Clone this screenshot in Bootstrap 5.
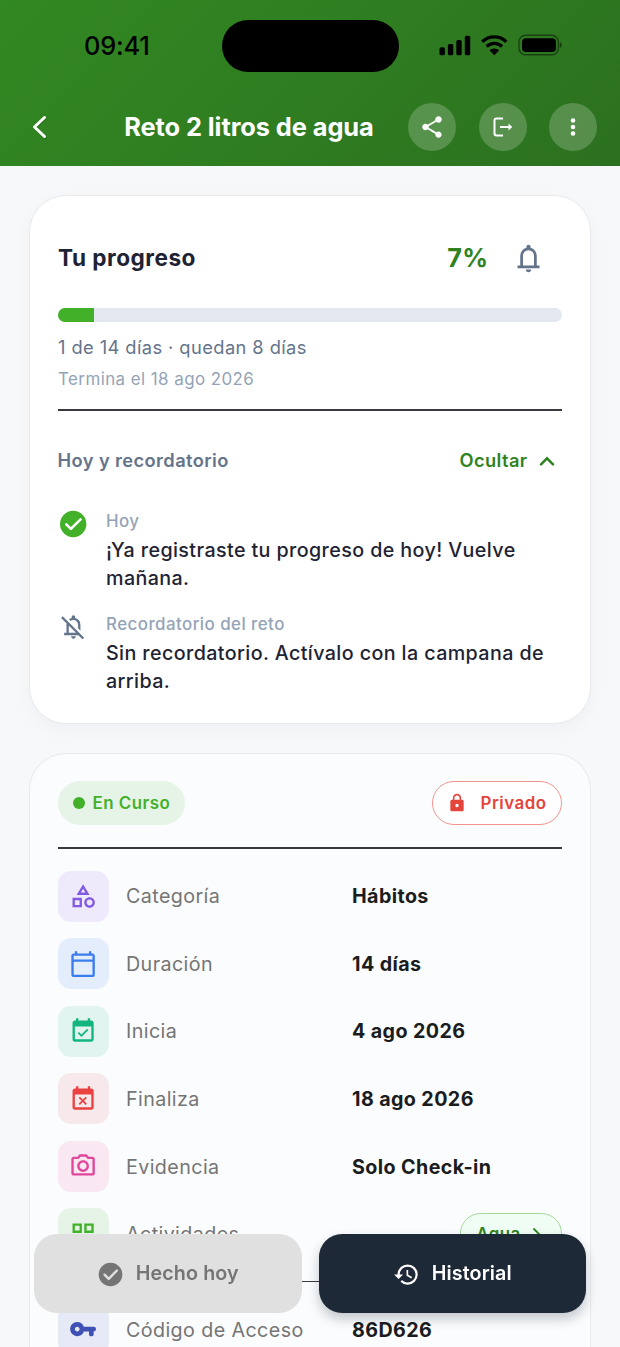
<!DOCTYPE html>
<html lang="es">
<head>
<meta charset="utf-8">
<meta name="viewport" content="width=device-width, initial-scale=1">
<title>Reto 2 litros de agua</title>
<link href="https://cdn.jsdelivr.net/npm/bootstrap@5.3.0/dist/css/bootstrap.min.css" rel="stylesheet">
<style>
  body { font-family: Inter, "Liberation Sans", sans-serif; background: #f6f8fa; color: #1e2333; height: 1347px; letter-spacing: .35px; }
  svg { display: block; flex: none; }
  .app-header { height: 166px; background: linear-gradient(135deg, #328822 0%, #2f7d21 50%, #2c701f 100%); }
  .status-bar { height: 91px; color: #000; }
  .clock { font-size: 25.4px; font-weight: 550; letter-spacing: -.2px; width: 137px; padding: 2px 0 0 84px; white-space: nowrap; }
  .island { width: 177px; height: 52px; border-radius: 26px; background: #000; margin-left: 84.5px; }
  .status-icons { margin: -1px 0 0 40.5px; }
  .toolbar { height: 72px; padding: 0 23px 0 31px; }
  .page-title { font-size: 25.4px; font-weight: 650; letter-spacing: -.08px; line-height: 1; color: #fff; padding-left: 41px; }
  .round-btn { width: 48px; height: 48px; background: rgba(255,255,255,.2); color: #fff; }
  .panel { margin: 0 29px 0 28.5px; border: 1.5px solid #e8eaed; border-radius: 37px; padding: 27.5px 28px; }
  .panel-progress { margin-top: 28.5px; height: 529px; padding-top: 28.5px; background: #fff; box-shadow: 0 6px 18px rgba(30,41,59,.035); }
  .panel-details { margin-top: 29px; height: 594px; background: #fafcfd; border-bottom: 0; border-radius: 37px 37px 0 0; padding-bottom: 0; }
  .head-row { height: 67.6px; }
  .panel-title { font-size: 22.6px; font-weight: 700; letter-spacing: .5px; padding: 1px 0 0 .5px; }
  .percent { font-size: 25.4px; font-weight: 750; color: #2f831f; margin-right: 6px; }
  .bell-btn { width: 67.6px; height: 67.6px; color: #64748b; padding-top: 1px; }
  .track { height: 14px; border-radius: 7px; background: #e3e8f0; margin-top: 16.5px; overflow: hidden; }
  .track .progress-bar { background: #43b02a; }
  .days { font-size: 18.3px; line-height: 26px; color: #64748b; margin-top: 12px; letter-spacing: .42px; padding-left: .5px; }
  .ends { font-size: 16.9px; line-height: 25px; color: #94a3b8; margin-top: 6.5px; letter-spacing: .45px; padding-left: .5px; }
  .rule { height: 1.5px; background: #3b3840; }
  .section-row { height: 50px; margin-top: 25.5px; font-size: 18.3px; font-weight: 630; color: #64748b; letter-spacing: .4px; }
  .toggle { color: #2f831f; padding-right: 7.5px; gap: 11px; }
  .note { gap: 18.5px; }
  .note > svg { margin-top: -1px; }
  .note-label { font-size: 16.9px; font-weight: 500; line-height: 23px; color: #94a3b8; letter-spacing: .45px; }
  .note-text { font-size: 19.7px; font-weight: 550; line-height: 28.1px; margin-top: 3px; letter-spacing: .4px; }
  .pill { height: 44px; border-radius: 22px; font-size: 16.9px; font-weight: 630; letter-spacing: .5px; }
  .pill-state { background: #e6f4e8; color: #43b02a; padding: 0 15px; gap: 8px; }
  .dot { width: 12px; height: 12px; background: #43b02a; }
  .pill-private { background: #fff; color: #e5443b; border: 1.3px solid #f2948e; padding: 0 14.5px 0 14px; gap: 14px; }
  .detail-row { height: 51px; margin-bottom: 16.6px; font-size: 19.7px; letter-spacing: .4px; }
  .tile { width: 51px; height: 51px; border-radius: 13px; margin-right: 17.5px; }
  .detail-name { width: 226px; color: #757575; padding-top: 2px; }
  .detail-value { color: #1a1c1e; font-weight: 650; padding-top: 2px; }
  .pill-link { height: 41px; border-radius: 21px; background: #f0fdf4; border: 1.3px solid #a5d89a; color: #2f831f; font-size: 16.9px; font-weight: 630; padding: 1px 14.5px 0 15.5px; gap: 6px; }
  .actions { padding: 0 34px; bottom: 34px; gap: 17px; }
  .action { height: 79px; border-radius: 23px; font-size: 19.7px; font-weight: 630; gap: 12px; letter-spacing: .1px; flex: 1 1 0; padding-top: 1px; }
  .action-done { background: #e0e0e0; color: #757575; }
  .action-log { background: #1e2937; color: #fff; box-shadow: 0 6px 12px rgba(30,41,59,.25); }
</style>
</head>
<body class="overflow-hidden">
<header class="app-header">
  <div class="status-bar d-flex align-items-center">
    <div class="clock">09:41</div>
    <div class="island"></div>
    <svg class="status-icons" width="125" height="22" viewBox="0 0 125 22">
      <g fill="#000">
        <rect x="0.5" y="13.3" width="5.4" height="8" rx="1.5"/>
        <rect x="8.9" y="10" width="5.4" height="11.3" rx="1.5"/>
        <rect x="17.3" y="6" width="5.4" height="15.3" rx="1.5"/>
        <rect x="25.8" y="1.8" width="5.4" height="19.5" rx="1.5"/>
        <path d="M55.3 14.6c1.9 0 3.6.7 4.7 1.9l-4.700 4.700-4.700-4.700c1.100-1.200 2.800-1.900 4.700-1.900z"/>
        <rect x="83" y="4.3" width="34" height="13.7" rx="4"/>
        <path opacity=".5" d="M120.8 8v6c1.200-.5 2-1.700 2-3s-.8-2.500-2-3z"/>
      </g>
      <path d="M43.3 7.800a17.300 17.300 0 0 1 24 0M47.600 12.500a11.200 11.200 0 0 1 15.400 0" fill="none" stroke="#000" stroke-width="3.300"/>
      <rect x="80" y="1.3" width="39.4" height="19.5" rx="6.5" fill="none" stroke="#000" stroke-opacity=".45" stroke-width="1.400"/>
    </svg>
  </div>
  <div class="toolbar d-flex align-items-center">
    <svg width="18" height="26" viewBox="0 0 18 26" fill="none" stroke-linecap="round" stroke-linejoin="round" stroke-width="3"><path d="M14 4.500 4 14l10 9.500" stroke="#1c5a12" stroke-opacity=".6"/><path d="M13.500 3.500 3.500 13l10 9.500" stroke="#fff"/></svg>
    <h1 class="page-title mb-0 flex-grow-1 text-center">Reto 2 litros de agua</h1>
    <div class="d-flex" style="gap:22.5px">
      <div class="round-btn rounded-circle d-flex align-items-center justify-content-center"><svg width="26" height="26" viewBox="0 0 24 24" fill="currentColor"><path d="M18 16.080c-.76 0-1.440.3-1.960.77L8.910 12.700c.05-.23.09-.46.09-.7s-.04-.47-.09-.7l7.050-4.110c.54.5 1.250.81 2.040.81 1.660 0 3-1.340 3-3s-1.340-3-3-3-3 1.340-3 3c0 .24.04.47.09.7L8.040 9.810C7.500 9.310 6.790 9 6 9c-1.660 0-3 1.340-3 3s1.340 3 3 3c.79 0 1.500-.31 2.040-.81l7.120 4.160c-.05.21-.08.43-.08.65 0 1.610 1.310 2.920 2.920 2.920s2.920-1.310 2.920-2.920-1.310-2.920-2.920-2.920z"/></svg></div>
      <div class="round-btn rounded-circle d-flex align-items-center justify-content-center"><svg width="26" height="26" viewBox="0 0 26 26" fill="none" stroke="currentColor" stroke-width="2"><path d="M13 4.500H6.500a2 2 0 0 0-2 2v13a2 2 0 0 0 2 2H13M10 13h9"/><path d="M18.500 9.500v7L22.300 13z" fill="currentColor" stroke="none"/></svg></div>
      <div class="round-btn rounded-circle d-flex align-items-center justify-content-center"><svg width="26" height="26" viewBox="0 0 24 24" fill="currentColor"><circle cx="12" cy="6" r="2.100"/><circle cx="12" cy="12" r="2.100"/><circle cx="12" cy="18" r="2.100"/></svg></div>
    </div>
  </div>
</header>

<main>
  <section class="panel panel-progress">
    <div class="head-row d-flex align-items-center">
      <div class="panel-title flex-grow-1">Tu progreso</div>
      <div class="percent">7%</div>
      <div class="bell-btn d-flex align-items-center justify-content-center"><svg width="33" height="33" viewBox="0 -960 960 960" fill="currentColor"><path d="M160-200v-80h80v-280q0-83 50-147.500T420-792v-28q0-25 17.500-42.500T480-880q25 0 42.500 17.500T540-820v28q80 20 130 84.500T720-560v280h80v80H160ZM480-80q-33 0-56.500-23.500T400-160h160q0 33-23.500 56.500T480-80ZM320-280h320v-280q0-66-47-113t-113-47q-66 0-113 47t-47 113v280Z"/></svg></div>
    </div>
    <div class="track d-flex"><div class="progress-bar" style="width:7.14%"></div></div>
    <div class="days">1 de 14 días · quedan 8 días</div>
    <div class="ends">Termina el 18 ago 2026</div>
    <div class="rule" style="margin-top:17.5px"></div>
    <div class="section-row d-flex align-items-center justify-content-between">
      <span>Hoy y recordatorio</span>
      <span class="toggle d-flex align-items-center">Ocultar
        <svg width="16" height="12" viewBox="0 0 16 12" fill="none" stroke="currentColor" stroke-width="2.500" stroke-linecap="round"><path d="M2 9.300 8 3.300l6 6"/></svg></span>
    </div>
    <div class="note d-flex" style="margin-top:23.5px">
      <svg width="30" height="30" viewBox="0 0 30 30"><circle cx="15.200" cy="15" r="13.200" fill="#43b02a"/><path d="m8.300 15.300 4.600 4.600L22.500 10.300" fill="none" stroke="#fff" stroke-width="2.600" stroke-linecap="round" stroke-linejoin="round"/></svg>
      <div>
        <div class="note-label">Hoy</div>
        <div class="note-text">¡Ya registraste tu progreso de hoy! Vuelve mañana.</div>
      </div>
    </div>
    <div class="note d-flex" style="margin-top:21px">
      <svg width="30" height="30" viewBox="-50 -995 1030 1030" fill="#64748b"><path d="M160-200v-80h80v-280q0-33 8.500-65t25.500-61l60 60q-7 16-10.500 32.500T320-560v280h248L56-792l56-56 736 736-56 56-146-144H160Zm560-154-80-80v-126q0-66-47-113t-113-47q-26 0-50 8t-44 24l-58-58q20-16 43-28t49-18v-28q0-25 17.500-42.500T480-880q25 0 42.500 17.500T540-820v28q80 20 130 84.500T720-560v206ZM480-80q-33 0-56.500-23.500T400-160h160q0 33-23.500 56.500T480-80Z"/></svg>
      <div>
        <div class="note-label">Recordatorio del reto</div>
        <div class="note-text">Sin recordatorio. Actívalo con la campana de arriba.</div>
      </div>
    </div>
  </section>

  <section class="panel panel-details overflow-hidden">
    <div class="d-flex justify-content-between">
      <div class="pill pill-state d-flex align-items-center"><span class="dot rounded-circle"></span><span style="padding-top:2px">En Curso</span></div>
      <div class="pill pill-private d-flex align-items-center"><svg width="20" height="20" viewBox="0 0 24 24" fill="currentColor"><path d="M18 8h-1V6c0-2.760-2.240-5-5-5S7 3.240 7 6v2H6c-1.100 0-2 .9-2 2v10c0 1.100.9 2 2 2h12c1.100 0 2-.9 2-2V10c0-1.100-.9-2-2-2zm-6 9c-1.100 0-2-.9-2-2s.9-2 2-2 2 .9 2 2-.9 2-2 2zm3.100-9H8.900V6c0-1.710 1.390-3.100 3.100-3.100s3.100 1.390 3.100 3.100v2z"/></svg><span style="padding-top:2px">Privado</span></div>
    </div>
    <div class="rule" style="margin:22px 0"></div>
    <div class="detail-row d-flex align-items-center">
      <div class="tile d-flex align-items-center justify-content-center" style="background:#eeeafc;color:#8259e2"><svg width="28.200" height="28.200" viewBox="0 0 24 24" fill="currentColor"><path d="M12 2l-5.500 9h11L12 2zm0 3.840L13.930 9h-3.870L12 5.840zM17.500 13c-2.490 0-4.500 2.010-4.500 4.500s2.010 4.500 4.500 4.500 4.500-2.010 4.500-4.500-2.010-4.500-4.500-4.500zm0 7c-1.380 0-2.500-1.120-2.500-2.500s1.120-2.500 2.500-2.500 2.500 1.120 2.500 2.500-1.120 2.500-2.500 2.500zM3 21.500h8v-8H3v8zm2-6h4v4H5v-4z"/></svg></div>
      <div class="detail-name">Categoría</div><div class="detail-value">Hábitos</div>
    </div>
    <div class="detail-row d-flex align-items-center">
      <div class="tile d-flex align-items-center justify-content-center" style="background:#e4edfb;color:#3b7ded"><svg width="28.200" height="28.200" viewBox="0 0 24 24" fill="currentColor"><path d="M20 3h-1V1h-2v2H7V1H5v2H4c-1.100 0-2 .9-2 2v16c0 1.100.9 2 2 2h16c1.100 0 2-.9 2-2V5c0-1.100-.9-2-2-2zm0 18H4V10h16v11zm0-13H4V5h16v3z"/></svg></div>
      <div class="detail-name">Duración</div><div class="detail-value">14 días</div>
    </div>
    <div class="detail-row d-flex align-items-center">
      <div class="tile d-flex align-items-center justify-content-center" style="background:#e2f4ef;color:#12b57e"><svg width="28.200" height="28.200" viewBox="0 0 24 24" fill="currentColor"><path d="M16.530 11.060L15.470 10l-4.880 4.880-2.120-2.120-1.060 1.060L10.590 17l5.940-5.940zM19 3h-1V1h-2v2H8V1H6v2H5c-1.110 0-1.990.9-1.990 2L3 19c0 1.100.89 2 2 2h14c1.100 0 2-.9 2-2V5c0-1.100-.9-2-2-2zm0 16H5V8h14v11z"/></svg></div>
      <div class="detail-name">Inicia</div><div class="detail-value">4 ago 2026</div>
    </div>
    <div class="detail-row d-flex align-items-center">
      <div class="tile d-flex align-items-center justify-content-center" style="background:#f7e8eb;color:#eb4141"><svg width="28.200" height="28.200" viewBox="0 0 24 24" fill="currentColor"><path d="M9.310 17l2.440-2.440L14.190 17l1.060-1.060-2.440-2.440 2.440-2.440L14.190 10l-2.440 2.440L9.310 10l-1.060 1.060 2.440 2.440-2.440 2.440L9.310 17zM19 3h-1V1h-2v2H8V1H6v2H5c-1.110 0-1.990.9-1.990 2L3 19c0 1.100.89 2 2 2h14c1.100 0 2-.9 2-2V5c0-1.100-.9-2-2-2zm0 16H5V8h14v11z"/></svg></div>
      <div class="detail-name">Finaliza</div><div class="detail-value">18 ago 2026</div>
    </div>
    <div class="detail-row d-flex align-items-center">
      <div class="tile d-flex align-items-center justify-content-center" style="background:#f9e7f2;color:#e0479a"><svg width="28.200" height="28.200" viewBox="0 0 24 24" fill="currentColor"><path d="M20 4h-3.170L15 2H9L7.170 4H4c-1.100 0-2 .9-2 2v12c0 1.100.9 2 2 2h16c1.100 0 2-.9 2-2V6c0-1.100-.9-2-2-2zm0 14H4V6h4.050l1.830-2h4.240l1.830 2H20v12zM12 7c-2.760 0-5 2.240-5 5s2.240 5 5 5 5-2.240 5-5-2.240-5-5-5zm0 8c-1.650 0-3-1.350-3-3s1.350-3 3-3 3 1.350 3 3-1.350 3-3 3z"/></svg></div>
      <div class="detail-name">Evidencia</div><div class="detail-value">Solo Check-in</div>
    </div>
    <div class="detail-row d-flex align-items-center mb-0">
      <div class="tile d-flex align-items-center justify-content-center" style="background:#e5f4e6;color:#43b02a"><svg width="28.200" height="28.200" viewBox="0 0 24 24" fill="currentColor"><path d="M3 3v8h8V3H3zm6 6H5V5h4v4zm-6 4v8h8v-8H3zm6 6H5v-4h4v4zm4-16v8h8V3h-8zm6 6h-4V5h4v4zm-6 4v8h8v-8h-8zm6 6h-4v-4h4v4z"/></svg></div>
      <div class="detail-name">Actividades</div>
      <div class="pill-link d-flex align-items-center ms-auto">Agua<svg width="20" height="20" viewBox="0 0 20 20" fill="none" stroke="currentColor" stroke-width="1.800" stroke-linecap="round"><path d="m7 5 5 5-5 5"/></svg></div>
    </div>
    <div class="rule" style="margin:21.5px 0"></div>
    <div class="detail-row d-flex align-items-center">
      <div class="tile d-flex align-items-center justify-content-center" style="background:#e6e9f6;color:#3f51b5"><svg width="28.200" height="28.200" viewBox="0 0 24 24" fill="currentColor"><path d="M12.650 10C11.830 7.670 9.610 6 7 6c-3.310 0-6 2.690-6 6s2.690 6 6 6c2.610 0 4.830-1.670 5.650-4H17v2.500a1.500 1.500 0 0 0 1.500 1.500h1a1.500 1.500 0 0 0 1.500-1.500V14a2 2 0 0 0 2-2 2 2 0 0 0-2-2H12.650zM7 14c-1.100 0-2-.9-2-2s.9-2 2-2 2 .9 2 2-.9 2-2 2z"/></svg></div>
      <div class="detail-name">Código de Acceso</div><div class="detail-value">86D626</div>
    </div>
  </section>
</main>

<div class="actions position-fixed start-0 end-0 d-flex">
  <div class="action action-done d-flex align-items-center justify-content-center"><svg width="27" height="27" viewBox="0 0 27 27"><circle cx="13.500" cy="13.500" r="11.800" fill="#757575"/><path d="m7.500 13.700 4.200 4.200 8.200-8.400" fill="none" stroke="#e0e0e0" stroke-width="2.400" stroke-linecap="round" stroke-linejoin="round"/></svg>Hecho hoy</div>
  <div class="action action-log d-flex align-items-center justify-content-center"><svg width="27" height="27" viewBox="0 0 24 24" fill="currentColor"><path d="M13 3a9 9 0 0 0-9 9H1l3.890 3.890.07.140L9 12H6c0-3.870 3.130-7 7-7s7 3.130 7 7-3.130 7-7 7c-1.930 0-3.680-.79-4.940-2.060l-1.420 1.420A8.954 8.954 0 0 0 13 21a9 9 0 0 0 0-18zm-1 5v5l4.280 2.540.72-1.210-3.500-2.080V8H12z"/></svg>Historial</div>
</div>
<script src="https://cdn.jsdelivr.net/npm/bootstrap@5.3.0/dist/js/bootstrap.bundle.min.js"></script>
</body>
</html>
